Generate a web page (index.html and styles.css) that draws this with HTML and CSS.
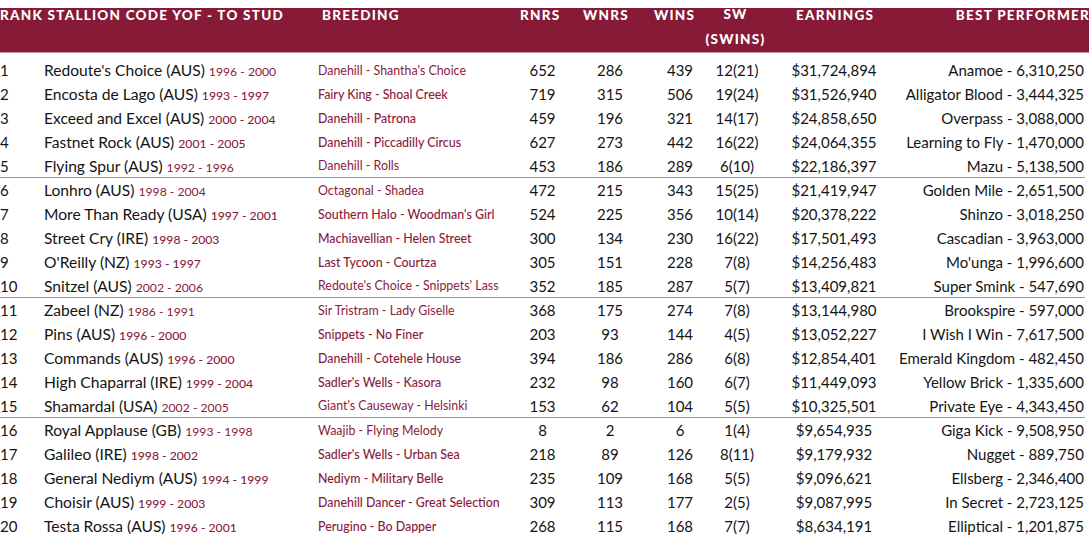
FILE: index.html
```html
<!DOCTYPE html>
<html>
<head>
<meta charset="utf-8">
<link rel="stylesheet" href="styles.css">
</head>
<body>
<div class="sheet">
  <div class="head">
    <div class="h h-title">RANK STALLION CODE YOF - TO STUD</div>
    <div class="h h-breed">BREEDING</div>
    <div class="h h-rnrs">RNRS</div>
    <div class="h h-wnrs">WNRS</div>
    <div class="h h-wins">WINS</div>
    <div class="h h-sw">SW<br>(SWINS)</div>
    <div class="h h-earn">EARNINGS</div>
    <div class="h h-best">BEST PERFORMER</div>
  </div>
  <div class="body">
    <div class="row light"><span class="rank">1</span><span class="name">Redoute's Choice (AUS) <span class="yrs">1996 - 2000</span></span><span class="breed">Danehill - Shantha's Choice</span><span class="num">652</span><span class="num">286</span><span class="num">439</span><span class="num">12(21)</span><span class="num earn">$31,724,894</span><span class="best">Anamoe - 6,310,250</span></div>
    <div class="row"><span class="rank">2</span><span class="name">Encosta de Lago (AUS) <span class="yrs">1993 - 1997</span></span><span class="breed">Fairy King - Shoal Creek</span><span class="num">719</span><span class="num">315</span><span class="num">506</span><span class="num">19(24)</span><span class="num earn">$31,526,940</span><span class="best">Alligator Blood - 3,444,325</span></div>
    <div class="row"><span class="rank">3</span><span class="name">Exceed and Excel (AUS) <span class="yrs">2000 - 2004</span></span><span class="breed">Danehill - Patrona</span><span class="num">459</span><span class="num">196</span><span class="num">321</span><span class="num">14(17)</span><span class="num earn">$24,858,650</span><span class="best">Overpass - 3,088,000</span></div>
    <div class="row"><span class="rank">4</span><span class="name">Fastnet Rock (AUS) <span class="yrs">2001 - 2005</span></span><span class="breed">Danehill - Piccadilly Circus</span><span class="num">627</span><span class="num">273</span><span class="num">442</span><span class="num">16(22)</span><span class="num earn">$24,064,355</span><span class="best">Learning to Fly - 1,470,000</span></div>
    <div class="row light sep"><span class="rank">5</span><span class="name">Flying Spur (AUS) <span class="yrs">1992 - 1996</span></span><span class="breed">Danehill - Rolls</span><span class="num">453</span><span class="num">186</span><span class="num">289</span><span class="num">6(10)</span><span class="num earn">$22,186,397</span><span class="best">Mazu - 5,138,500</span></div>
    <div class="row light"><span class="rank">6</span><span class="name">Lonhro (AUS) <span class="yrs">1998 - 2004</span></span><span class="breed">Octagonal - Shadea</span><span class="num">472</span><span class="num">215</span><span class="num">343</span><span class="num">15(25)</span><span class="num earn">$21,419,947</span><span class="best">Golden Mile - 2,651,500</span></div>
    <div class="row"><span class="rank">7</span><span class="name">More Than Ready (USA) <span class="yrs">1997 - 2001</span></span><span class="breed">Southern Halo - Woodman's Girl</span><span class="num">524</span><span class="num">225</span><span class="num">356</span><span class="num">10(14)</span><span class="num earn">$20,378,222</span><span class="best">Shinzo - 3,018,250</span></div>
    <div class="row"><span class="rank">8</span><span class="name">Street Cry (IRE) <span class="yrs">1998 - 2003</span></span><span class="breed">Machiavellian - Helen Street</span><span class="num">300</span><span class="num">134</span><span class="num">230</span><span class="num">16(22)</span><span class="num earn">$17,501,493</span><span class="best">Cascadian - 3,963,000</span></div>
    <div class="row"><span class="rank">9</span><span class="name">O'Reilly (NZ) <span class="yrs">1993 - 1997</span></span><span class="breed">Last Tycoon - Courtza</span><span class="num">305</span><span class="num">151</span><span class="num">228</span><span class="num">7(8)</span><span class="num earn">$14,256,483</span><span class="best">Mo'unga - 1,996,600</span></div>
    <div class="row light sep"><span class="rank">10</span><span class="name">Snitzel (AUS) <span class="yrs">2002 - 2006</span></span><span class="breed">Redoute's Choice - Snippets' Lass</span><span class="num">352</span><span class="num">185</span><span class="num">287</span><span class="num">5(7)</span><span class="num earn">$13,409,821</span><span class="best">Super Smink - 547,690</span></div>
    <div class="row light"><span class="rank">11</span><span class="name">Zabeel (NZ) <span class="yrs">1986 - 1991</span></span><span class="breed">Sir Tristram - Lady Giselle</span><span class="num">368</span><span class="num">175</span><span class="num">274</span><span class="num">7(8)</span><span class="num earn">$13,144,980</span><span class="best">Brookspire - 597,000</span></div>
    <div class="row"><span class="rank">12</span><span class="name">Pins (AUS) <span class="yrs">1996 - 2000</span></span><span class="breed">Snippets - No Finer</span><span class="num">203</span><span class="num">93</span><span class="num">144</span><span class="num">4(5)</span><span class="num earn">$13,052,227</span><span class="best">I Wish I Win - 7,617,500</span></div>
    <div class="row"><span class="rank">13</span><span class="name">Commands (AUS) <span class="yrs">1996 - 2000</span></span><span class="breed">Danehill - Cotehele House</span><span class="num">394</span><span class="num">186</span><span class="num">286</span><span class="num">6(8)</span><span class="num earn">$12,854,401</span><span class="best">Emerald Kingdom - 482,450</span></div>
    <div class="row"><span class="rank">14</span><span class="name">High Chaparral (IRE) <span class="yrs">1999 - 2004</span></span><span class="breed">Sadler's Wells - Kasora</span><span class="num">232</span><span class="num">98</span><span class="num">160</span><span class="num">6(7)</span><span class="num earn">$11,449,093</span><span class="best">Yellow Brick - 1,335,600</span></div>
    <div class="row light sep"><span class="rank">15</span><span class="name">Shamardal (USA) <span class="yrs">2002 - 2005</span></span><span class="breed">Giant's Causeway - Helsinki</span><span class="num">153</span><span class="num">62</span><span class="num">104</span><span class="num">5(5)</span><span class="num earn">$10,325,501</span><span class="best">Private Eye - 4,343,450</span></div>
    <div class="row light"><span class="rank">16</span><span class="name">Royal Applause (GB) <span class="yrs">1993 - 1998</span></span><span class="breed">Waajib - Flying Melody</span><span class="num">8</span><span class="num">2</span><span class="num">6</span><span class="num">1(4)</span><span class="num earn">$9,654,935</span><span class="best">Giga Kick - 9,508,950</span></div>
    <div class="row"><span class="rank">17</span><span class="name">Galileo (IRE) <span class="yrs">1998 - 2002</span></span><span class="breed">Sadler's Wells - Urban Sea</span><span class="num">218</span><span class="num">89</span><span class="num">126</span><span class="num">8(11)</span><span class="num earn">$9,179,932</span><span class="best">Nugget - 889,750</span></div>
    <div class="row"><span class="rank">18</span><span class="name">General Nediym (AUS) <span class="yrs">1994 - 1999</span></span><span class="breed">Nediym - Military Belle</span><span class="num">235</span><span class="num">109</span><span class="num">168</span><span class="num">5(5)</span><span class="num earn">$9,096,621</span><span class="best">Ellsberg - 2,346,400</span></div>
    <div class="row"><span class="rank">19</span><span class="name">Choisir (AUS) <span class="yrs">1999 - 2003</span></span><span class="breed">Danehill Dancer - Great Selection</span><span class="num">309</span><span class="num">113</span><span class="num">177</span><span class="num">2(5)</span><span class="num earn">$9,087,995</span><span class="best">In Secret - 2,723,125</span></div>
    <div class="row"><span class="rank">20</span><span class="name">Testa Rossa (AUS) <span class="yrs">1996 - 2001</span></span><span class="breed">Perugino - Bo Dapper</span><span class="num">268</span><span class="num">115</span><span class="num">168</span><span class="num">7(7)</span><span class="num earn">$8,634,191</span><span class="best">Elliptical - 1,201,875</span></div>
  </div>
</div>
</body>
</html>
```
FILE: styles.css
```css
html, body {
  margin: 0;
  padding: 0;
  background: #ffffff;
}
body {
  font-family: "Lato", "Liberation Sans", sans-serif;
  color: #141414;
}
.sheet {
  width: 1089px;
  padding-top: 8px;
}
.head {
  background: #861a37;
  height: 44px;
  border-bottom: 1px solid #c9899a;
  display: flex;
  align-items: flex-start;
  color: #ffffff;
  font-weight: 900;
  font-size: 13.5px;
  letter-spacing: 1.25px;
  line-height: 26px;
}
.h {
  margin-top: -6px;
  white-space: nowrap;
}
.h-title { width: 322px; }
.h-breed { width: 198px; }
.h-rnrs { width: 63px; }
.h-wnrs { width: 71px; }
.h-wins { width: 51px; }
.h-sw { width: 61px; text-align: center; margin-top: -6px; line-height: 25px; }
.h-earn { width: 154px; padding-left: 30px; box-sizing: border-box; }
.h-best { flex: 1; text-align: right; margin-right: -1px; }
.body {
  padding-top: 5px;
}
.row {
  display: grid;
  grid-template-columns: 44px 274px 192px 65px 70px 70px 44px 130px 195px;
  height: 24px;
  align-items: center;
  font-size: 15px;
  white-space: nowrap;
  box-sizing: border-box;
}
.row.sep {
  border-bottom: 1px solid #c97a90;
  margin-right: 4px;
}
.name { font-size: 15.6px; }
.num { text-align: center; }
.earn { padding-left: 20px; }
.best { text-align: right; }
.yrs {
  font-size: 12.2px;
  color: #8a1a3c;
  font-weight: 500;
}
.breed {
  font-size: 12.4px;
  color: #8a1a3c;
  font-weight: 500;
}
.light .yrs, .light .breed {
  font-weight: 400;
}
```
